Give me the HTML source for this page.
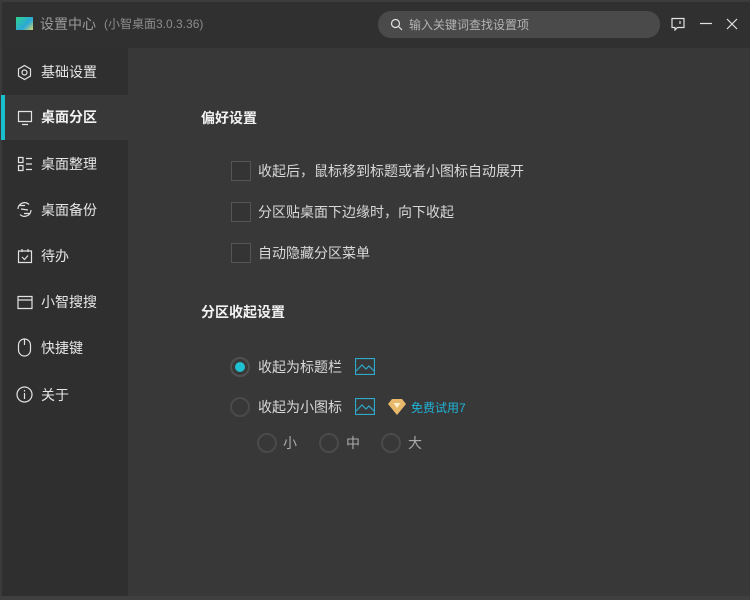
<!DOCTYPE html>
<html lang="zh"><head><meta charset="utf-8"><style>
html,body{margin:0;padding:0;width:750px;height:600px;overflow:hidden;background:#383838}
body{position:relative;font-family:"Liberation Sans","Noto Sans CJK SC",sans-serif;font-size:14px;color:#d8d8d8}
div,svg{position:absolute}
.t{white-space:nowrap;line-height:20px;height:20px}
.n{left:41px;color:#e6e6e6}
.b{font-weight:bold;color:#f2f2f2}
.c{left:231px;width:18px;height:18px;border:1px solid #555;background:#343434}
.r{border-radius:50%;border:2px solid #4a4a4a;box-sizing:border-box;background:#383838}
svg{fill:none;stroke:#e2e2e2;stroke-width:1.2}
</style></head><body>
<div style="left:0;top:0;width:750px;height:48px;background:#303030"></div>
<div style="left:0;top:0;width:750px;height:2px;background:#3c3c3c"></div>
<div style="left:0;top:48px;width:128px;height:552px;background:#2f2f2f"></div>
<div style="left:0;top:0;width:2px;height:600px;background:#3a3a3a"></div>
<div style="left:0;top:596px;width:750px;height:4px;background:#3f3f3f"></div>
<div style="left:16px;top:17px;width:17px;height:13px;background:linear-gradient(135deg,#2fd28e,#2aa8d8 60%,#d8d86a)"></div>
<div class="t" style="left:40px;top:14px;color:#9a9a9a">设置中心</div>
<div class="t" style="left:104px;top:14px;color:#8c8c8c;font-size:12px">(小智桌面3.0.3.36)</div>
<div style="left:378px;top:11px;width:282px;height:27px;border-radius:13px;background:#4a4a4a"></div>
<svg style="left:390px;top:18px" width="13" height="13" viewBox="0 0 13 13"><circle cx="5.500" cy="5.500" r="4"/><path d="M8.500 8.500l3.500 3.500"/></svg>
<div class="t" style="left:409px;top:15px;font-size:12px;color:#b4b4b4">输入关键词查找设置项</div>
<svg style="left:671px;top:17px" width="14" height="14" viewBox="0 0 14 14"><path d="M1 1.500h12v9H6.500L4 13v-2.500H1z"/><path d="M9 4v3"/></svg>
<svg style="left:699px;top:17px" width="14" height="14" viewBox="0 0 14 14"><path d="M1 6.500h12"/></svg>
<svg style="left:725px;top:17px" width="14" height="14" viewBox="0 0 14 14"><path d="M2 2l10 10M12 2L2 12"/></svg>

<div style="left:0;top:95px;width:128px;height:45px;background:#383838"></div>
<div style="left:1px;top:95px;width:4px;height:45px;background:#17c0cc"></div>

<svg style="left:16px;top:64px" width="17" height="17" viewBox="0 0 17 17"><path d="M8.500 1.500l6 3.500v7l-6 3.500-6-3.500V5z"/><circle cx="8.500" cy="8.500" r="2.500"/></svg>
<div class="t n" style="top:62px">基础设置</div>
<svg style="left:17px;top:110px" width="16" height="16" viewBox="0 0 16 16"><path d="M1.500 1.500h13v10h-13zM5 14.500h6"/></svg>
<div class="t n b" style="top:107px">桌面分区</div>
<svg style="left:17px;top:156px" width="16" height="16" viewBox="0 0 16 16"><path d="M1.500 1.500h4.500v5H1.500zM1.500 9.500h4.500v5H1.500zM9 2.500h6M9 8h6M9 13.500h6"/></svg>
<div class="t n" style="top:154px">桌面整理</div>
<svg style="left:16px;top:201px" width="17" height="17" viewBox="0 0 17 17"><path d="M2 8a6.500 6.500 0 0 1 11-4.500M15 9a6.500 6.500 0 0 1-11 4.500M3 4.500h6M14 12.500H8M5 8l7 1"/></svg>
<div class="t n" style="top:200px">桌面备份</div>
<svg style="left:17px;top:248px" width="16" height="16" viewBox="0 0 16 16"><path d="M1.500 3h13v11.500h-13zM5 1v3M11 1v3M5 9l2.500 2.500L11 7.500"/></svg>
<div class="t n" style="top:246px">待办</div>
<svg style="left:17px;top:295px" width="16" height="15" viewBox="0 0 16 15"><path d="M1 1.500h14v12H1zM1 5h14"/></svg>
<div class="t n" style="top:292px">小智搜搜</div>
<svg style="left:17px;top:338px" width="15" height="19" viewBox="0 0 15 19"><rect x="1.500" y="1" width="12" height="17" rx="6"/><path d="M7.500 1v6"/></svg>
<div class="t n" style="top:338px">快捷键</div>
<svg style="left:16px;top:386px" width="17" height="17" viewBox="0 0 17 17"><circle cx="8.500" cy="8.500" r="7.500"/><path d="M8.500 7v6M8.500 4v1.500"/></svg>
<div class="t n" style="top:385px">关于</div>

<div class="t b" style="left:201px;top:108px">偏好设置</div>
<div class="c" style="top:161px"></div>
<div class="t" style="left:258px;top:161px">收起后，鼠标移到标题或者小图标自动展开</div>
<div class="c" style="top:202px"></div>
<div class="t" style="left:258px;top:202px">分区贴桌面下边缘时，向下收起</div>
<div class="c" style="top:243px"></div>
<div class="t" style="left:258px;top:243px">自动隐藏分区菜单</div>

<div class="t b" style="left:201px;top:302px">分区收起设置</div>
<div class="r" style="left:230px;top:357px;width:20px;height:20px;border-color:#505050"></div>
<div style="left:235px;top:362px;width:10px;height:10px;border-radius:50%;background:#1fc0d0"></div>
<div class="t" style="left:258px;top:357px">收起为标题栏</div>
<svg style="left:355px;top:358px;stroke:#2fa8cc" width="20" height="17" viewBox="0 0 20 17"><path d="M.5.500h19v16H.500zM1 13l6-6 4 4 3-3 5 5"/></svg>
<div class="r" style="left:230px;top:397px;width:20px;height:20px"></div>
<div class="t" style="left:258px;top:397px">收起为小图标</div>
<svg style="left:355px;top:398px;stroke:#2fa8cc" width="20" height="17" viewBox="0 0 20 17"><path d="M.5.500h19v16H.500zM1 13l6-6 4 4 3-3 5 5"/></svg>
<svg style="left:388px;top:398px;stroke:none" width="18" height="17" viewBox="0 0 18 17"><path fill="#e8b96a" d="M4 1h10l4 5-9 11L0 6z"/><path fill="#fbeecb" d="M5.500 5h7L9 10z"/></svg>
<div class="t" style="left:411px;top:398px;font-size:12px;color:#1fb4d8">免费试用7</div>
<div class="r" style="left:257px;top:433px;width:20px;height:20px"></div>
<div class="t" style="left:283px;top:433px;color:#aaa">小</div>
<div class="r" style="left:319px;top:433px;width:20px;height:20px"></div>
<div class="t" style="left:346px;top:433px;color:#aaa">中</div>
<div class="r" style="left:381px;top:433px;width:20px;height:20px"></div>
<div class="t" style="left:408px;top:433px;color:#aaa">大</div>
</body></html>
